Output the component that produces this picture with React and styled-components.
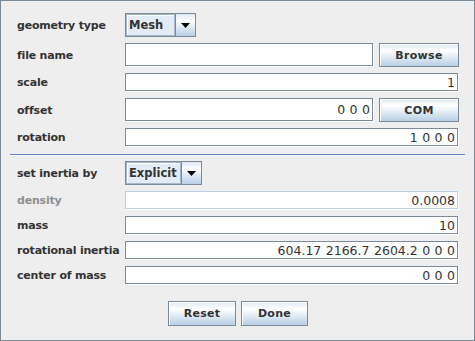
import React from 'react'
import styled, { createGlobalStyle } from 'styled-components'

const GlobalStyle = createGlobalStyle`
  body {
    margin: 0;
    background: #eeeeee;
  }
`

const fields = [
  { label: 'scale', value: '1' },
  { label: 'offset', value: '0 0 0', button: 'COM' },
  { label: 'rotation', value: '1 0 0 0' },
]

const inertiaFields = [
  { label: 'density', value: '0.0008', disabled: true },
  { label: 'mass', value: '10' },
  { label: 'rotational inertia', value: '604.17 2166.7 2604.2 0 0 0' },
  { label: 'center of mass', value: '0 0 0' },
]

const Dropdown = ({ value, width }) => (
  <Combo $width={width}>
    <ComboText>{value}</ComboText>
    <ComboArrow>
      <svg width='9' height='5' viewBox='0 0 9 5'>
        <path d='M0 0 H9 L4.5 5 Z' fill='#000' />
      </svg>
    </ComboArrow>
  </Combo>
)

const FieldRow = ({ label, value, button, disabled }) => (
  <>
    <Label $disabled={disabled}>{label}</Label>
    <Row>
      <Field readOnly value={value} $disabled={disabled} $tall={!!button} />
      {button ? <Button $width={80} $height={24}>{button}</Button> : null}
    </Row>
  </>
)

const App = () => {
  return (
    <Window>
      <GlobalStyle />
      <Form>
        <Label>geometry type</Label>
        <Row>
          <Dropdown value='Mesh' width={71} />
        </Row>
        <FieldRow label='file name' value='' button='Browse' />
        {fields.map(f => (
          <FieldRow key={f.label} {...f} />
        ))}
      </Form>
      <Separator />
      <Form>
        <Label>set inertia by</Label>
        <Row>
          <Dropdown value='Explicit' width={77} />
        </Row>
        {inertiaFields.map(f => (
          <FieldRow key={f.label} {...f} />
        ))}
      </Form>
      <ButtonBar>
        <Button $width={68} $height={25}>Reset</Button>
        <Button $width={67} $height={25}>Done</Button>
      </ButtonBar>
    </Window>
  )
}

const Window = styled.div`
  width: 475px;
  height: 341px;
  box-sizing: border-box;
  border: 1px solid #7a8a99;
  background: #eeeeee;
  padding: 12px 15px 0 16px;
  display: flex;
  flex-direction: column;
  font-family: 'DejaVu Sans', sans-serif;
`

const Form = styled.div`
  display: grid;
  grid-template-columns: 108px 1fr;
  row-gap: 6px;
  align-items: center;
`

const Label = styled.div`
  font-size: 11px;
  font-weight: bold;
  color: ${p => (p.$disabled ? '#8e8f91' : '#333333')};
  white-space: nowrap;
  letter-spacing: -0.2px;
`

const Row = styled.div`
  display: flex;
  gap: 5px;
  align-items: flex-start;
`

const Field = styled.input`
  flex: 1;
  min-width: 0;
  height: ${p => (p.$tall ? '23px' : '18px')};
  box-sizing: border-box;
  margin: 0 1px 1px 0;
  padding: 0 2px;
  border: 1px solid ${p => (p.$disabled ? '#b8cfe5' : '#7a8a99')};
  box-shadow: 1px 1px 0 #ffffff;
  background: #ffffff;
  text-align: right;
  font-family: 'DejaVu Sans', sans-serif;
  font-size: 12.5px;
  word-spacing: 0.5px;
  color: #333333;
  outline: none;
`

const Button = styled.button`
  width: ${p => p.$width}px;
  height: ${p => p.$height}px;
  box-sizing: border-box;
  padding: 0;
  border: 1px solid #7a8a99;
  box-shadow: inset 1px 1px 0 #ffffff;
  background: linear-gradient(to bottom, #dde8f3 0%, #ffffff 30%, #b8cfe5 100%);
  font-family: 'DejaVu Sans', sans-serif;
  font-size: 11px;
  font-weight: bold;
  color: #333333;
  letter-spacing: 0.3px;
`

const Combo = styled.div`
  width: ${p => p.$width}px;
  height: 24px;
  box-sizing: border-box;
  display: flex;
  border: 1px solid #7a8a99;
`

const ComboText = styled.div`
  flex: 1;
  display: flex;
  align-items: center;
  padding-left: 2px;
  background: #e3ebf4;
  border: 1px solid #a3b8cc;
  box-shadow: inset 1px 1px 0 #ffffff;
  font-size: 11.5px;
  font-weight: bold;
  color: #333333;
  white-space: nowrap;
  overflow: hidden;
`

const ComboArrow = styled.div`
  width: 19px;
  display: flex;
  align-items: center;
  justify-content: center;
  border-left: 1px solid #7a8a99;
  background: linear-gradient(to bottom, #dde8f3 0%, #ffffff 30%, #b8cfe5 100%);
`

const Separator = styled.div`
  height: 1px;
  margin: 7px -6px 5px -7px;
  background: #6382bf;
  border-bottom: 1px solid #ffffff;
`

const ButtonBar = styled.div`
  display: flex;
  justify-content: center;
  gap: 5px;
  margin-top: 16px;
`

export default App
